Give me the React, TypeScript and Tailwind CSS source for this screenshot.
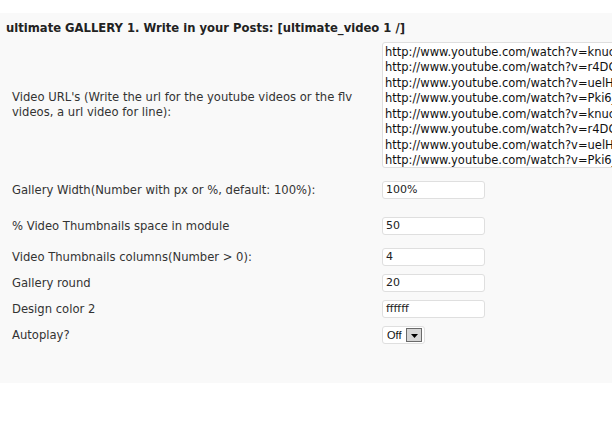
const urls = [
  "http://www.youtube.com/watch?v=Pki6jXz0Uq8",
  "http://www.youtube.com/watch?v=knucLz8yF2k",
  "http://www.youtube.com/watch?v=r4DCqAoM1vE",
  "http://www.youtube.com/watch?v=uelHwf8o7_U",
  "http://www.youtube.com/watch?v=Pki6jXz0Uq8",
  "http://www.youtube.com/watch?v=knucLz8yF2k",
  "http://www.youtube.com/watch?v=r4DCqAoM1vE",
  "http://www.youtube.com/watch?v=uelHwf8o7_U",
  "http://www.youtube.com/watch?v=Pki6jXz0Uq8",
];

const fields = [
  { label: "Gallery Width(Number with px or %, default: 100%):", value: "100%", mt: "mt-[13px]" },
  { label: "% Video Thumbnails space in module", value: "50", mt: "mt-[18px]" },
  { label: "Video Thumbnails columns(Number > 0):", value: "4", mt: "mt-[13px]" },
  { label: "Gallery round", value: "20", mt: "mt-[8px]" },
  { label: "Design color 2", value: "ffffff", mt: "mt-[8px]" },
];

function Field({ label, value, mt }: { label: string; value: string; mt: string }) {
  return (
    <div className={`flex items-center ${mt}`}>
      <div className="w-[370px] shrink-0 pr-3 text-[11.6px] leading-[15px] text-[#333]">{label}</div>
      <div className="flex h-[18px] w-[103px] items-center rounded-[3px] border border-[#dfdfdf] bg-white pl-[3px] text-[#222]">
        {value}
      </div>
    </div>
  );
}

export default function App() {
  return (
    <div className="h-[442px] w-[612px] overflow-hidden bg-white pt-[13px] font-['DejaVu_Sans',Verdana,sans-serif] text-[11px]">
      <div className="h-[370px] overflow-hidden bg-[#f9f9f9]">
        <h3 className="pl-[6px] pt-[8px] text-[11.6px] font-bold leading-[14px] text-[#222]">
          ultimate GALLERY 1. Write in your Posts: [ultimate_video 1 /]
        </h3>

        <div className="pl-3">
          <div className="mt-[7px] flex items-center">
            <div className="w-[370px] shrink-0 pr-3 text-[11.6px] leading-[15px] text-[#333]">
              Video URL's (Write the url for the youtube videos or the flv videos, a url video for line):
            </div>
            <div className="h-[126px] w-[320px] shrink-0 overflow-hidden rounded-[3px] border border-[#dfdfdf] bg-white pl-[2px]">
              <div className="mt-[-14px] whitespace-nowrap text-[11.5px] leading-[15.5px] text-[#111]">
                {urls.map((u, i) => (
                  <div key={i}>{u}</div>
                ))}
              </div>
            </div>
          </div>

          {fields.map((f) => (
            <Field key={f.label} {...f} />
          ))}

          <div className="mt-[8px] flex items-center">
            <div className="w-[370px] shrink-0 pr-3 text-[11.6px] leading-[15px] text-[#333]">Autoplay?</div>
            <div className="flex h-[18px] w-[43px] items-center rounded-[3px] border border-[#dfdfdf] bg-white pl-[4px] text-[#111]">
              <span className="w-[19px] font-['Liberation_Sans',Arial,sans-serif] text-[11px]">Off</span>
              <span className="flex h-[14px] w-[16px] items-end justify-center border border-[#6b6b6b] bg-[#d6d6d6] pb-[3px]">
                <svg width="7" height="4" viewBox="0 0 7 4">
                  <path d="M0 0h7L3.5 4z" fill="#000" />
                </svg>
              </span>
            </div>
          </div>
        </div>
      </div>
    </div>
  );
}
